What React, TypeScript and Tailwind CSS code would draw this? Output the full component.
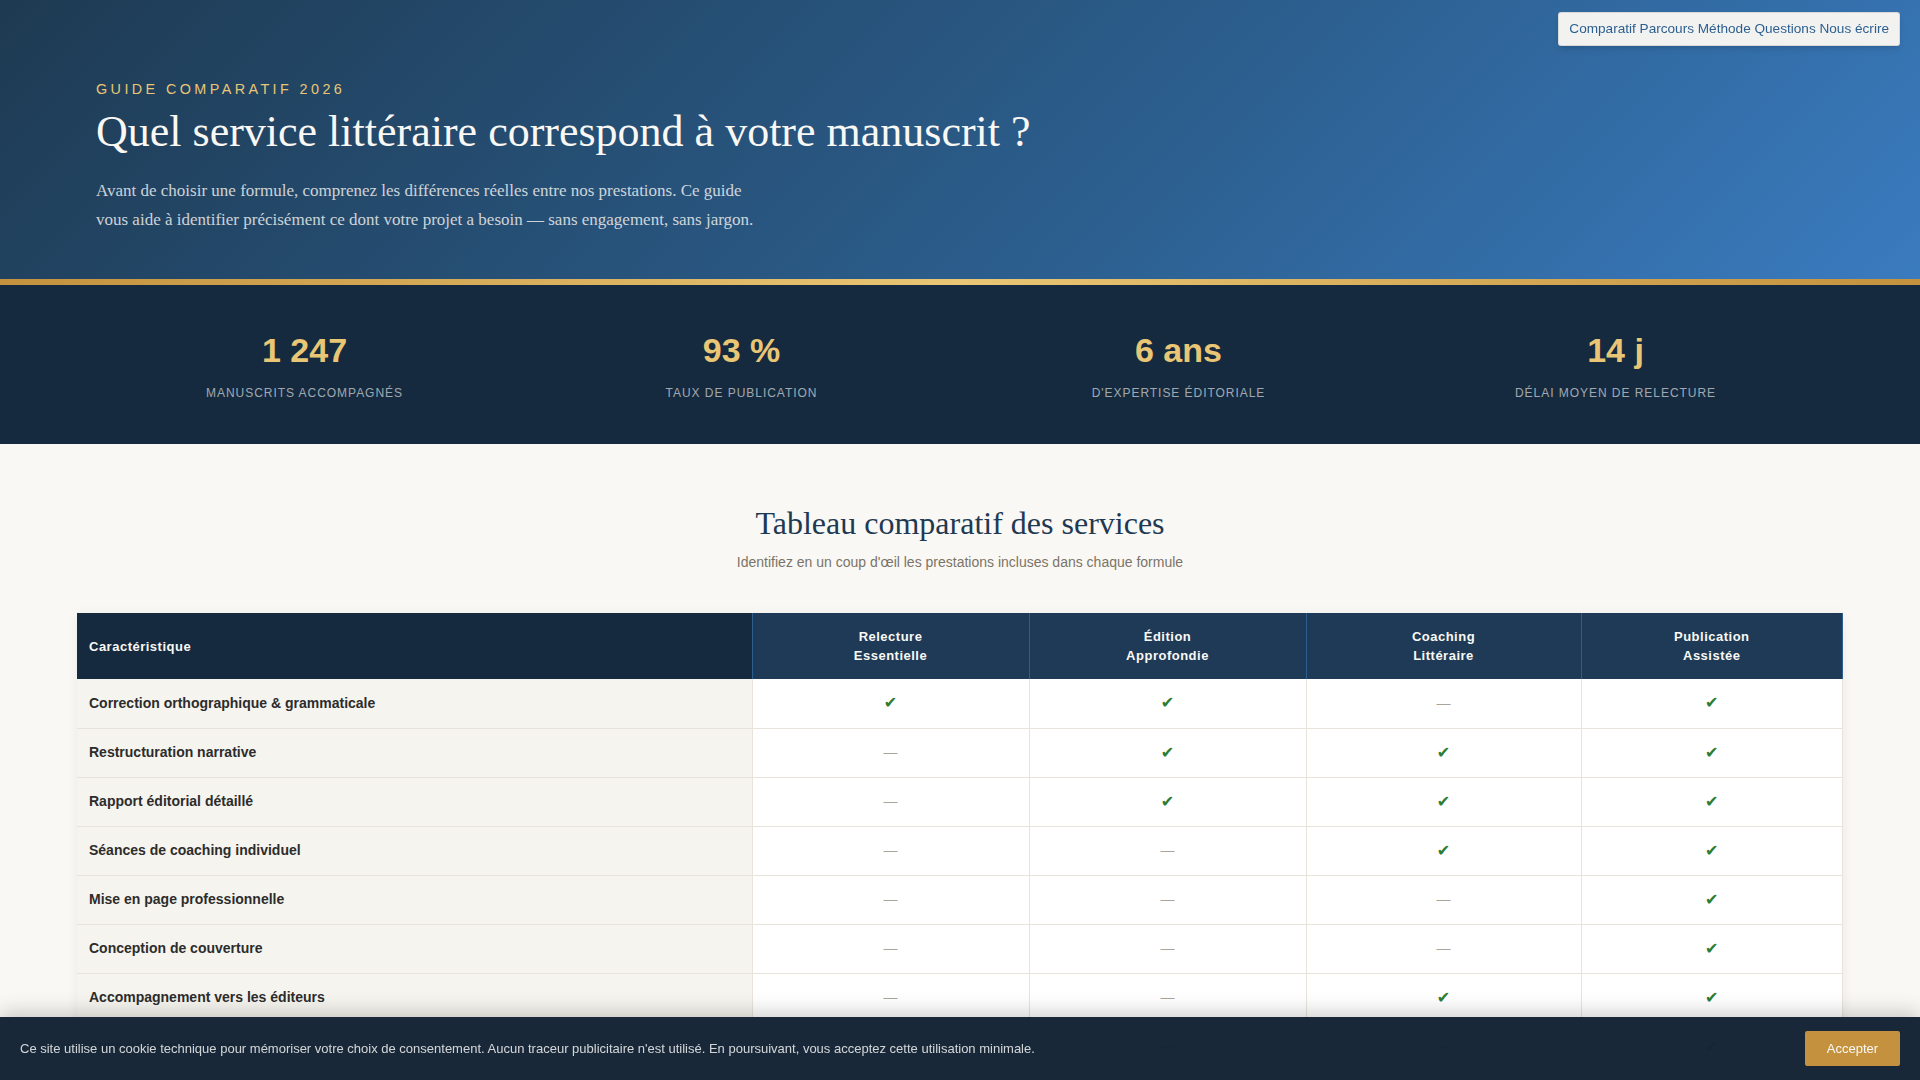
const SANS = "font-['Liberation_Sans',Arial,sans-serif]";

const STATS = [
  { value: "1 247", label: "Manuscrits accompagnés" },
  { value: "93 %", label: "Taux de publication" },
  { value: "6 ans", label: "D'expertise éditoriale" },
  { value: "14 j", label: "Délai moyen de relecture" },
];

const PLANS = [
  ["Relecture", "Essentielle"],
  ["Édition", "Approfondie"],
  ["Coaching", "Littéraire"],
  ["Publication", "Assistée"],
];

const ROWS: [string, boolean[]][] = [
  ["Correction orthographique & grammaticale", [true, true, false, true]],
  ["Restructuration narrative", [false, true, true, true]],
  ["Rapport éditorial détaillé", [false, true, true, true]],
  ["Séances de coaching individuel", [false, false, true, true]],
  ["Mise en page professionnelle", [false, false, false, true]],
  ["Conception de couverture", [false, false, false, true]],
  ["Accompagnement vers les éditeurs", [false, false, true, true]],
  ["Suivi post-publication", [false, false, false, true]],
];

export default function App() {
  return (
    <div className={`min-h-screen bg-[#faf8f4] text-[#2c2c2c] ${SANS}`}>
      <nav className="fixed top-3 right-5 z-20 rounded-[3px] border border-black/10 bg-[#f2f2f1] px-2.5 py-[7px] text-[13.6px] leading-[18px] text-[#2c5f8f] shadow-md">
        <a>Comparatif</a> <a>Parcours</a> <a>Méthode</a> <a>Questions</a> <a>Nous écrire</a>
      </nav>

      <header className="h-[279px] bg-[linear-gradient(135deg,#1e3a52_0%,#2c5f8f_60%,#3a7bbf_100%)] pl-[96px] pt-[80px]">
        <p className="text-[14.4px] leading-[18px] tracking-[3.4px] text-[#e8c675] uppercase">Guide comparatif 2026</p>
        <h1 className="mt-[7px] font-['Liberation_Serif',serif] text-[44px] leading-[54px] font-normal text-[#faf8f4]">
          Quel service littéraire correspond à votre manuscrit ?
        </h1>
        <p className="mt-[17px] w-[680px] font-['Liberation_Serif',serif] text-[17px] leading-[29.4px] text-[#faf8f4]/80">
          Avant de choisir une formule, comprenez les différences réelles entre nos prestations. Ce guide vous aide à identifier précisément ce dont votre projet a besoin — sans engagement, sans jargon.
        </p>
      </header>
      <div className="h-[6px] bg-[linear-gradient(90deg,#c4923e,#e8c675,#c4923e)]" />

      <section className="grid h-[159px] grid-cols-4 bg-[#152a3e] px-[86px] pt-[45px] text-center">
        {STATS.map((s) => (
          <div key={s.value}>
            <div className="text-[34px] leading-[40px] font-bold text-[#e8c675]">{s.value}</div>
            <div className="mt-[15px] text-[12px] leading-[16px] tracking-[0.96px] text-white/60 uppercase">{s.label}</div>
          </div>
        ))}
      </section>

      <main className="px-[77px] pt-[60px] pb-16">
        <h2 className="text-center font-['Liberation_Serif',serif] text-[32px] leading-[38px] font-normal text-[#1e3a52]">
          Tableau comparatif des services
        </h2>
        <p className="mt-2.5 text-center text-[14px] leading-[20px] text-[#7a7468]">
          Identifiez en un coup d'œil les prestations incluses dans chaque formule
        </p>

        <table className="mt-[41px] w-full table-fixed border-collapse bg-white shadow-[0_2px_12px_rgba(0,0,0,0.06)]">
          <colgroup>
            <col className="w-[675px]" />
            <col className="w-[277px]" />
            <col className="w-[277px]" />
            <col className="w-[275px]" />
            <col />
          </colgroup>
          <thead>
            <tr className="h-[66px] text-[13px] leading-[19px] font-bold tracking-[0.5px] text-[#faf8f4]">
              <th className="bg-[#152a3e] px-3 text-left">Caractéristique</th>
              {PLANS.map((p) => (
                <th key={p[0]} className="border-x border-[#2c5f8f] bg-[#1e3a56] px-3 text-center">
                  {p[0]}
                  <br />
                  {p[1]}
                </th>
              ))}
            </tr>
          </thead>
          <tbody>
            {ROWS.map(([label, cells]) => (
              <tr key={label} className="h-[49px] border-b border-[#e8e4dc]">
                <td className="bg-[#f6f4ef] px-3 text-[14px] font-bold text-[#2c2c2c]">{label}</td>
                {cells.map((on, i) =>
                  on ? (
                    <td key={i} className="border-x border-[#e8e4dc] text-center font-['DejaVu_Sans',sans-serif] text-[16px] text-[#2e7d32]">
                      ✔
                    </td>
                  ) : (
                    <td key={i} className="border-x border-[#e8e4dc] text-center text-[14px] text-[#aaa59a]">
                      —
                    </td>
                  ),
                )}
              </tr>
            ))}
          </tbody>
        </table>
      </main>

      <div className="fixed right-0 bottom-0 left-0 z-30 flex h-[63px] items-center justify-between bg-[#132434]/98 px-5 shadow-[0_-4px_20px_rgba(0,0,0,0.2)]">
        <p className="text-[13px] text-white/80">
          Ce site utilise un cookie technique pour mémoriser votre choix de consentement. Aucun traceur publicitaire n'est utilisé. En poursuivant, vous acceptez cette utilisation minimale.
        </p>
        <button className="h-[35px] w-[95px] rounded-[2px] bg-[#c4923e] text-[13px] text-[#faf8f4]">Accepter</button>
      </div>
    </div>
  );
}
